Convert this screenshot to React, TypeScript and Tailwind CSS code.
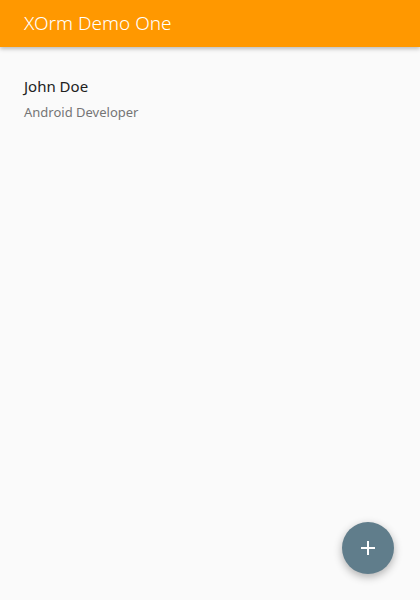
import React from "react";

const App = () => {
    return (
        <div className="relative w-[420px] h-[600px] overflow-hidden bg-[#fafafa] font-['Noto_Sans',sans-serif]">
            <div className="h-[47px] bg-[#ff9800] flex items-center px-6 shadow-[0_2px_4px_rgba(0,0,0,0.25)]">
                <p className="text-white text-[19px] font-light">XOrm Demo One</p>
            </div>

            <div className="px-6 pt-[29px]">
                <p className="text-[15px] leading-5 text-[#212121]">John Doe</p>
                <p className="text-[13px] leading-5 text-[#757575] mt-[6px]">Android Developer</p>
            </div>

            <button className="absolute right-[26px] bottom-[26px] w-[52px] h-[52px] rounded-full bg-[#607d8b] flex items-center justify-center shadow-[0_3px_8px_rgba(0,0,0,0.3)]">
                <svg width="14" height="14" viewBox="0 0 14 14">
                    <path d="M7 0v14M0 7h14" stroke="white" strokeWidth="2" />
                </svg>
            </button>
        </div>
    );
};

export default App;
